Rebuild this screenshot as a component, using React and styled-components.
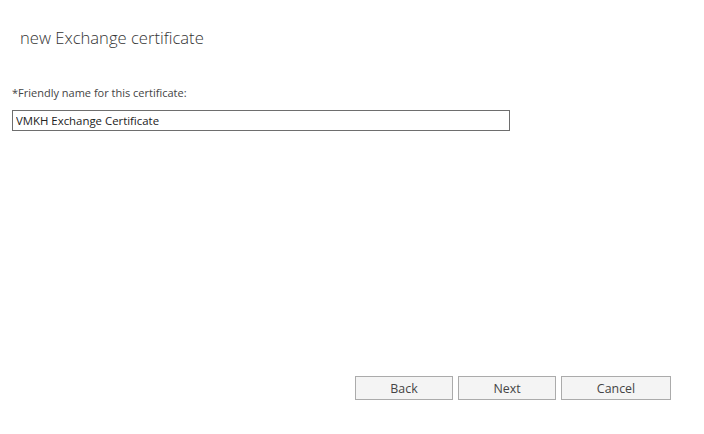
import styled, { createGlobalStyle } from 'styled-components';

const GlobalStyle = createGlobalStyle`
  html, body {
    margin: 0;
    padding: 0;
    background: #ffffff;
  }
  body {
    font-family: "Open Sans", "Noto Sans", sans-serif;
  }
`;

const Page = styled.div`
  width: 704px;
  height: 434px;
  box-sizing: border-box;
  display: flex;
  flex-direction: column;
  padding: 26px 0 34px 12px;
`;

const Title = styled.h1`
  margin: 0 0 0 8px;
  font-size: 16.6px;
  font-weight: 300;
  color: #333333;
  line-height: 23px;
`;

const Field = styled.div`
  display: flex;
  flex-direction: column;
  margin-top: 36px;
`;

const Label = styled.label`
  font-size: 11px;
  color: #444444;
  line-height: 16px;
  margin-bottom: 9px;
`;

const Input = styled.input`
  width: 498px;
  height: 21px;
  box-sizing: border-box;
  border: 1px solid #6e6e6e;
  padding: 0 3px;
  font-family: inherit;
  font-size: 11.4px;
  color: #222222;
  outline: none;
`;

const Footer = styled.div`
  margin-top: auto;
  display: flex;
  gap: 5px;
  padding-left: 343px;
`;

const Button = styled.button`
  width: ${(p) => p.$w || 98}px;
  height: 24px;
  box-sizing: border-box;
  border: 1px solid #ababab;
  background: #f4f4f4;
  font-family: inherit;
  font-size: 12.4px;
  color: #444444;
  cursor: pointer;
`;

const App = () => {
  return (
    <>
      <GlobalStyle />
      <Page>
        <Title>new Exchange certificate</Title>
        <Field>
          <Label>*Friendly name for this certificate:</Label>
          <Input defaultValue="VMKH Exchange Certificate" />
        </Field>
        <Footer>
          <Button>Back</Button>
          <Button>Next</Button>
          <Button $w={110}>Cancel</Button>
        </Footer>
      </Page>
    </>
  );
};

export default App;
